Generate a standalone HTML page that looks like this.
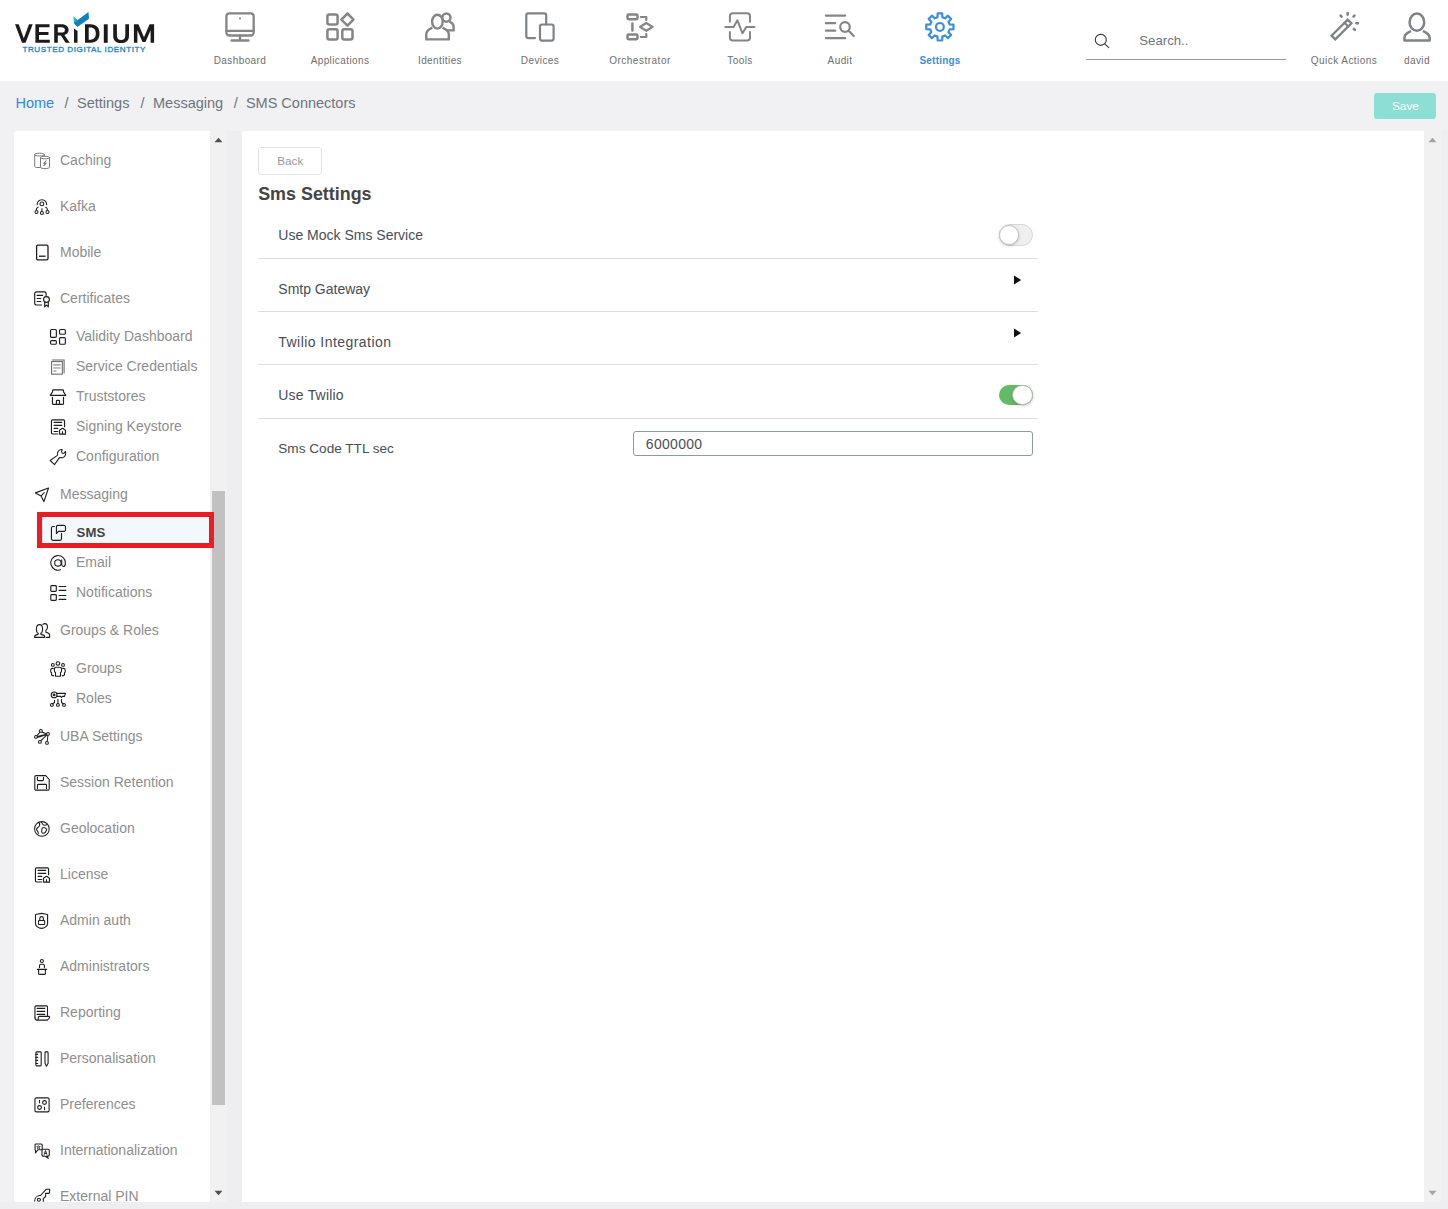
<!DOCTYPE html><html><head><meta charset="utf-8"><title>SMS Connectors</title><style>
*{box-sizing:border-box;margin:0;padding:0}
html,body{width:1448px;height:1209px;overflow:hidden;background:#f1f1f3;font-family:"Liberation Sans",sans-serif}
.t{position:absolute;white-space:nowrap}
svg{position:absolute;overflow:visible}
</style></head><body>
<div style="position:absolute;left:0;top:0;width:1448px;height:81px;background:#fff"></div>
<svg style="left:0;top:0" width="170" height="60" viewBox="0 0 170 60">
<g fill="#1b1b1b" fill-rule="evenodd">
<path d="M15 24.3H18.7L23.8 38.3L29 24.3H32.7L25.6 42.8H22Z"/>
<path d="M35.4 24.3H49.5V27.3H39V32.1H48.5V35H39V39.8H49.8V42.8H35.4Z"/>
<path d="M54.2 42.8V24.3H61.5C66 24.3 68.6 26.6 68.6 29.9C68.6 32.5 67 34.3 64.4 35L69.8 42.8H65.6L60.9 35.5H57.8V42.8Z M57.8 27.3V32.6H61.3C63.7 32.6 64.9 31.6 64.9 29.9C64.9 28.2 63.7 27.3 61.3 27.3Z"/>
<path d="M74 28.4L77.5 31V42.8H74Z"/>
<path d="M85 24.3H90.5C96.5 24.3 99.5 28 99.5 33.5C99.5 39 96.5 42.8 90.5 42.8H85Z M88.7 27.4V39.7H90.3C94 39.7 95.8 37.5 95.8 33.5C95.8 29.5 94 27.4 90.3 27.4Z"/>
<path d="M103.8 24.3H107.7V42.8H103.8Z"/>
<path d="M113.2 24.3H116.9V35.4C116.9 38.4 118.5 39.9 121.1 39.9C123.6 39.9 125.3 38.4 125.3 35.4V24.3H129V35.7C129 40.4 126 43.1 121.1 43.1C116.1 43.1 113.2 40.4 113.2 35.7Z"/>
<path d="M133.9 42.8V24.3H138.4L144 37.3L149.6 24.3H154.1V42.8H150.6V30.2L145.5 42H142.5L137.4 30.2V42.8Z"/>
</g>
<path d="M73.3 16.3L77.9 19.9L74.1 23.2Z" fill="#2bb5c0"/>
<path d="M73.6 22.9L88.5 12.1L89 18.8L77.4 27.1Z" fill="#1380b8"/>
<text x="22.4" y="51.9" font-family="Liberation Sans" font-size="8.1" fill="#1f8bc6" stroke="#1f8bc6" stroke-width="0.35" textLength="123" lengthAdjust="spacing">TRUSTED DIGITAL IDENTITY</text>
</svg>
<svg style="left:220px;top:5px" width="40" height="40" viewBox="0 0 40 40"><g fill="none" stroke="#858585" stroke-width="2.3" stroke-linecap="round"><rect x="6.4" y="8.3" width="27.3" height="22.2" rx="3"/><path d="M6.4 25.9H33.7M20 30.5V35.3M11.5 35.5H28.5"/></g><circle cx="20" cy="13.3" r="1.1" fill="#858585"/></svg>
<div class="t" style="left:190px;width:100px;text-align:center;top:54.88px;font-size:10px;line-height:12px;color:#6e6e6e;font-weight:normal;letter-spacing:0.4px">Dashboard</div>
<svg style="left:320px;top:5px" width="40" height="40" viewBox="0 0 40 40"><g fill="none" stroke="#858585" stroke-width="2.5"><rect x="7.4" y="9.4" width="10.2" height="10.2" rx="2"/><rect x="7.4" y="24.3" width="10.2" height="10.2" rx="2"/><rect x="22.3" y="24.3" width="10.2" height="10.2" rx="2"/><path d="M27.5 8.5L33.5 14.6L27.5 20.7L21.4 14.6Z" stroke-linejoin="round"/></g></svg>
<div class="t" style="left:290px;width:100px;text-align:center;top:54.88px;font-size:10px;line-height:12px;color:#6e6e6e;font-weight:normal;letter-spacing:0.4px">Applications</div>
<svg style="left:420px;top:5px" width="40" height="40" viewBox="0 0 40 40"><g fill="none" stroke="#858585" stroke-width="2.4" stroke-linejoin="round"><circle cx="26.4" cy="12.6" r="4.1"/><path d="M29.3 16.6C32 17.5 33.6 19.4 33.6 22V25.4H25"/><path d="M12.3 22.6C8 24.6 6.3 26.3 6.3 29V34.4H28.8V29C28.8 26.8 26.5 24.6 22.6 22.6" fill="#fff"/><ellipse cx="17.4" cy="16.7" rx="5.3" ry="6.9" fill="#fff"/></g></svg>
<div class="t" style="left:390px;width:100px;text-align:center;top:54.88px;font-size:10px;line-height:12px;color:#6e6e6e;font-weight:normal;letter-spacing:0.4px">Identities</div>
<svg style="left:520px;top:5px" width="40" height="40" viewBox="0 0 40 40"><g fill="none" stroke="#7d8387" stroke-width="2.2" stroke-linecap="round"><path d="M15 33.1H8.3A2 2 0 0 1 6.3 31.1V10.3A2 2 0 0 1 8.3 8.3H24.2A2 2 0 0 1 26.2 10.3V19.5"/><rect x="20" y="19.5" width="13.6" height="16.1" rx="2"/></g></svg>
<div class="t" style="left:490px;width:100px;text-align:center;top:54.88px;font-size:10px;line-height:12px;color:#6e6e6e;font-weight:normal;letter-spacing:0.4px">Devices</div>
<svg style="left:620px;top:5px" width="40" height="40" viewBox="0 0 40 40"><g fill="none" stroke="#858585" stroke-width="2.5" stroke-linecap="round" stroke-linejoin="round"><rect x="7.5" y="9.6" width="10" height="4.6" rx="1.2"/><rect x="7.5" y="29.6" width="10" height="4.6" rx="1.2"/><path d="M12.4 18.4V25.5"/><path d="M20.8 12H26.3V15M20.8 32H26.3V29" stroke-width="2.2"/><path d="M20 21.9L26.3 18L32.6 21.9L26.3 25.8Z" stroke-width="2.2"/></g></svg>
<div class="t" style="left:590px;width:100px;text-align:center;top:54.88px;font-size:10px;line-height:12px;color:#6e6e6e;font-weight:normal;letter-spacing:0.5px">Orchestrator</div>
<svg style="left:720px;top:5px" width="40" height="40" viewBox="0 0 40 40"><g fill="none" stroke="#858585" stroke-width="2" stroke-linejoin="round"><path d="M9.9 17.5V11.3A3 3 0 0 1 12.9 8.3H27A3 3 0 0 1 30 11.3V17.5M9.9 26.2V32.4A3 3 0 0 0 12.9 35.4H27A3 3 0 0 0 30 32.4V26.2"/><path d="M5.3 21.9H13.6L17.4 15.3L22.5 28.3L26.2 21.9H34.5" stroke-linecap="round"/></g></svg>
<div class="t" style="left:690px;width:100px;text-align:center;top:54.88px;font-size:10px;line-height:12px;color:#6e6e6e;font-weight:normal;letter-spacing:0.4px">Tools</div>
<svg style="left:820px;top:5px" width="40" height="40" viewBox="0 0 40 40"><g fill="none" stroke="#858585" stroke-width="2.2" stroke-linecap="round"><path d="M5.9 10.6H25.2M5.9 18.2H15.2M5.9 25.7H15.2M5.9 33.1H25.2"/><circle cx="25" cy="22" r="4.8"/><path d="M28.6 25.8L33.7 31"/></g></svg>
<div class="t" style="left:790px;width:100px;text-align:center;top:54.88px;font-size:10px;line-height:12px;color:#6e6e6e;font-weight:normal;letter-spacing:0.4px">Audit</div>
<svg style="left:920px;top:5px" width="40" height="40" viewBox="0 0 40 40"><g fill="none" stroke="#3b8ee0" stroke-width="2.2" stroke-linejoin="round"><path d="M17.49 12.19 L17.63 8.29 L22.17 8.29 L22.31 12.19 L25.06 13.33 L27.92 10.67 L31.13 13.88 L28.47 16.74 L29.61 19.49 L33.51 19.63 L33.51 24.17 L29.61 24.31 L28.47 27.06 L31.13 29.92 L27.92 33.13 L25.06 30.47 L22.31 31.61 L22.17 35.51 L17.63 35.51 L17.49 31.61 L14.74 30.47 L11.88 33.13 L8.67 29.92 L11.33 27.06 L10.19 24.31 L6.29 24.17 L6.29 19.63 L10.19 19.49 L11.33 16.74 L8.67 13.88 L11.88 10.67 L14.74 13.33 Z"/><circle cx="19.9" cy="21.9" r="3.9"/></g></svg>
<div class="t" style="left:890px;width:100px;text-align:center;top:54.88px;font-size:10px;line-height:12px;color:#3b8ee0;font-weight:bold;letter-spacing:0.2px">Settings</div>
<svg style="left:1090px;top:30px" width="24" height="24" viewBox="0 0 24 24"><g fill="none" stroke="#3a3a3a" stroke-width="1.15"><circle cx="10.8" cy="9.8" r="5.5"/><path d="M14.8 13.8L18.7 17.7" stroke-linecap="round"/></g></svg>
<div class="t" style="left:1139.3px;top:32.98px;font-size:13.2px;line-height:16px;color:#6c757d;font-weight:normal;letter-spacing:0px;">Search..</div>
<div style="position:absolute;left:1086px;top:59px;width:200px;height:1px;background:#8d9b99"></div>
<svg style="left:1324px;top:5px" width="40" height="40" viewBox="0 0 40 40"><g fill="none" stroke="#7d8387" stroke-width="2.3" stroke-linecap="round"><path d="M23.7 14.6L27.4 18.3L11.3 34.4L7.6 30.7Z" stroke-linejoin="miter"/><path d="M20.5 17.8L24.2 21.5"/><path d="M16.6 10.6L17.6 11.6M23.6 8V9.6M30.5 10.6L29.5 11.6M32.4 18.2H34M29.8 23.8L30.8 24.8" stroke-width="2.6"/></g></svg>
<svg style="left:1397px;top:5px" width="40" height="40" viewBox="0 0 40 40"><g fill="none" stroke="#7d8387" stroke-width="2.5" stroke-linejoin="round"><ellipse cx="19.9" cy="17.2" rx="7.3" ry="8.6"/><path d="M14 26C9 28.5 7.5 29.8 7.5 32.5V35.6H32.6V32.5C32.6 29.8 31 28.5 26 26"/></g></svg>
<div class="t" style="left:1294px;width:100px;text-align:center;top:54.88px;font-size:10px;line-height:12px;color:#6e6e6e;letter-spacing:0.45px">Quick Actions</div>
<div class="t" style="left:1367px;width:100px;text-align:center;top:54.88px;font-size:10px;line-height:12px;color:#6e6e6e;letter-spacing:0.4px">david</div>
<div class="t" style="left:15.5px;top:94.83px;font-size:14.5px;line-height:17px;color:#2f88f0;font-weight:normal;letter-spacing:0px;">Home</div>
<div class="t" style="left:64.5px;top:94.83px;font-size:14.5px;line-height:17px;color:#6c757d;font-weight:normal;letter-spacing:0px;">/</div>
<div class="t" style="left:77px;top:94.83px;font-size:14.5px;line-height:17px;color:#6c757d;font-weight:normal;letter-spacing:0px;">Settings</div>
<div class="t" style="left:140.5px;top:94.83px;font-size:14.5px;line-height:17px;color:#6c757d;font-weight:normal;letter-spacing:0px;">/</div>
<div class="t" style="left:153px;top:94.83px;font-size:14.5px;line-height:17px;color:#6c757d;font-weight:normal;letter-spacing:0px;">Messaging</div>
<div class="t" style="left:233.7px;top:94.83px;font-size:14.5px;line-height:17px;color:#6c757d;font-weight:normal;letter-spacing:0px;">/</div>
<div class="t" style="left:245.9px;top:94.83px;font-size:14.5px;line-height:17px;color:#6c757d;font-weight:normal;letter-spacing:0px;">SMS Connectors</div>
<div style="position:absolute;left:1374px;top:93px;width:62px;height:26px;background:#8ddfd5;border-radius:3px"></div>
<div class="t" style="left:1392px;top:99.06px;font-size:11.8px;line-height:14px;color:#fff;font-weight:normal;letter-spacing:0px;">Save</div>
<div style="position:absolute;left:14px;top:131px;width:196px;height:1071px;background:#fff;border-radius:3px 0 0 3px;overflow:hidden">
<div style="position:absolute;left:28px;top:386px;width:168px;height:26px;background:#f2f8fc;border-left:1px solid #cfe3f5"></div>
<svg style="left:20px;top:21px" width="16" height="16" viewBox="0 0 16 16"><g fill="none" stroke="#7a7a7a" stroke-width="1"><path d="M6.5 15.5H3C1.8 15.5 0.7 15 0.7 14.3V2.6C0.7 1.8 2.8 1.2 5.5 1.2S10.4 1.8 10.4 2.6V4.3M0.7 2.6C0.7 3.4 2.8 4 5.5 4S10.4 3.4 10.4 2.6"/><path d="M6.5 5.5C6.5 4.8 8.5 4.3 11 4.3S15.5 4.8 15.5 5.5V15.3C15.5 16 13.5 16.6 11 16.6S6.5 16 6.5 15.3Z"/><path d="M6.5 5.5C6.5 6.2 8.5 6.8 11 6.8S15.5 6.2 15.5 5.5"/><path d="M12.3 8.5L9.9 11.2H12L9.6 13.8" stroke-width="1.1"/></g></svg>
<div class="t" style="left:46px;top:21.00px;font-size:14px;line-height:17px;color:#8e8e8e">Caching</div>
<svg style="left:20px;top:67px" width="16" height="16" viewBox="0 0 16 16"><g fill="none" stroke="#1e1e1e" stroke-width="1.05"><circle cx="7.9" cy="5.9" r="1.9"/><path d="M3.2 7.1A4.75 4.75 0 1 1 12.6 7.1"/><path d="M4.5 8.9C3.2 9.4 2.4 10.2 2.4 11.3V12.4M11.3 8.9C12.6 9.4 13.4 10.2 13.4 11.3V12.4M7.9 10.3V13.4"/><circle cx="2.5" cy="14" r="1.5"/><circle cx="7.9" cy="15" r="1.5"/><circle cx="13.5" cy="14" r="1.5"/></g></svg>
<div class="t" style="left:46px;top:67.00px;font-size:14px;line-height:17px;color:#8e8e8e">Kafka</div>
<svg style="left:20px;top:113px" width="16" height="16" viewBox="0 0 16 16"><g fill="none" stroke="#1e1e1e" stroke-width="1.3"><rect x="2.6" y="1.2" width="11.4" height="14.6" rx="1.3"/><path d="M5 12.2H11.6"/></g></svg>
<div class="t" style="left:46px;top:113.00px;font-size:14px;line-height:17px;color:#8e8e8e">Mobile</div>
<svg style="left:20px;top:159px" width="16" height="16" viewBox="0 0 16 16"><g fill="none" stroke="#1e1e1e" stroke-width="1.15" stroke-linecap="round"><path d="M7.6 15H2.4A1.7 1.7 0 0 1 .7 13.3V3.6A1.7 1.7 0 0 1 2.4 1.9H10.4A1.7 1.7 0 0 1 12.1 3.6V6.6"/><path d="M3.1 5.4H8.7M3.1 8.5H6.8M3.1 11.5H6.8"/><circle cx="12.5" cy="9.5" r="2.9"/><path d="M10.7 12V16.6L12.5 15.3L14.3 16.6V12"/></g></svg>
<div class="t" style="left:46px;top:159.00px;font-size:14px;line-height:17px;color:#8e8e8e">Certificates</div>
<svg style="left:36px;top:197px" width="16" height="16" viewBox="0 0 16 16"><g fill="none" stroke="#1e1e1e" stroke-width="1.15"><rect x=".55" y="1.5" width="5.8" height="7.85" rx="1"/><rect x="9.55" y="1.5" width="5.8" height="4.75" rx="1"/><rect x=".55" y="12.55" width="5.8" height="3.7" rx="1"/><rect x="9.55" y="9.55" width="5.8" height="6.7" rx="1"/></g></svg>
<div class="t" style="left:62px;top:197.00px;font-size:14px;line-height:17px;color:#8e8e8e">Validity Dashboard</div>
<svg style="left:36px;top:227px" width="16" height="16" viewBox="0 0 16 16"><g fill="none" stroke-linecap="round"><rect x="1.6" y="3.6" width="10.75" height="12.55" stroke="#666" stroke-width="1.05"/><path d="M2.5 1.9H14.1V15" stroke="#666" stroke-width="1.05"/><path d="M3.9 6.9H10.1M3.9 10H10.1M3.9 13H5.9" stroke="#aaa" stroke-width="1.6"/></g></svg>
<div class="t" style="left:62px;top:227.00px;font-size:14px;line-height:17px;color:#8e8e8e">Service Credentials</div>
<svg style="left:36px;top:257px" width="16" height="16" viewBox="0 0 16 16"><g fill="none" stroke="#1e1e1e" stroke-width="1.15" stroke-linejoin="round" stroke-linecap="round"><path d="M2.6 3.9V2.6A.8.8 0 0 1 3.4 1.9H12.7A.8.8 0 0 1 13.5 2.6V3.9L15.8 7.3H.2L2.6 3.9"/><path d="M2.45 9.3V15.4A1 1 0 0 0 3.45 16.4H12.5A1 1 0 0 0 13.5 15.4V9.3M6.4 16.4V13.1A.8.8 0 0 1 7.2 12.3H8.7A.8.8 0 0 1 9.5 13.1V16.4"/></g></svg>
<div class="t" style="left:62px;top:257.00px;font-size:14px;line-height:17px;color:#8e8e8e">Truststores</div>
<svg style="left:36px;top:287px" width="16" height="16" viewBox="0 0 16 16"><g fill="none" stroke="#1e1e1e" stroke-width="1.15" stroke-linecap="round" stroke-linejoin="round"><path d="M7.7 16H2.45A1 1 0 0 1 1.45 15V2.9A1 1 0 0 1 2.45 1.9H13.55A1 1 0 0 1 14.55 2.9V8.7"/><path d="M4.1 4.4H11.7M4.1 7.4H11.7M4.1 10.4H7.7M4.1 13.5H7.7"/><path d="M9.5 16.1V12.3L12.5 10.3L15.5 12.3V16.1ZM12.5 16.1V13.6"/></g></svg>
<div class="t" style="left:62px;top:287.00px;font-size:14px;line-height:17px;color:#8e8e8e">Signing Keystore</div>
<svg style="left:36px;top:317px" width="16" height="16" viewBox="0 0 16 16"><g fill="none" stroke="#1e1e1e" stroke-width="1.05" stroke-linejoin="round"><path d="M.2 12.5L7.4 7.4C7 4.5 8.5 1.6 11 1.4L12.3 1.7L11.5 3.6L12.3 5.3H13.9L15.5 3.4C16 6.5 15 9 12.4 9.7L9.6 9.4L4.5 16.6Z"/></g></svg>
<div class="t" style="left:62px;top:317.00px;font-size:14px;line-height:17px;color:#8e8e8e">Configuration</div>
<svg style="left:20px;top:355px" width="16" height="16" viewBox="0 0 16 16"><g fill="none" stroke="#1e1e1e" stroke-width="1.15" stroke-linejoin="round"><path d="M1.4 6.9L14.5 2L9.9 15.6L7.1 9.9Z"/><path d="M7.1 9.9L10.5 6.3"/></g></svg>
<div class="t" style="left:46px;top:355.00px;font-size:14px;line-height:17px;color:#8e8e8e">Messaging</div>
<svg style="left:36px;top:393px" width="16" height="16" viewBox="0 0 16 16"><g fill="none" stroke="#fff" stroke-width="3" stroke-linejoin="round"><path d="M6.4 9.5V2.9A1.5 1.5 0 0 1 7.9 1.4H14A1.5 1.5 0 0 1 15.5 2.9V5.9A1.5 1.5 0 0 1 14 7.4H8.5Z"/></g><g fill="none" stroke="#1e1e1e" stroke-width="1.15" stroke-linejoin="round" stroke-linecap="round"><path d="M4.5 2.45H2.9A1.45 1.45 0 0 0 1.45 3.9V14.8A1.5 1.5 0 0 0 2.95 16.3H10A1.5 1.5 0 0 0 11.5 14.8V9.3"/><path d="M6.4 9.5V2.9A1.5 1.5 0 0 1 7.9 1.4H14A1.5 1.5 0 0 1 15.5 2.9V5.9A1.5 1.5 0 0 1 14 7.4H8.5Z"/></g></svg>
<div class="t" style="left:62.6px;top:393.78px;font-size:13.2px;line-height:16px;color:#454545;font-weight:bold">SMS</div>
<svg style="left:36px;top:423px" width="16" height="16" viewBox="0 0 16 16"><g fill="none" stroke="#1e1e1e" stroke-width="1.1"><circle cx="7.9" cy="8.9" r="3.2"/><path d="M11.7 5.5V10.6C11.7 11.8 12.5 12.5 13.5 12.5C14.8 12.5 15.4 11 15.4 8.9A7.3 7.3 0 1 0 10.9 15.6"/></g></svg>
<div class="t" style="left:62px;top:423.00px;font-size:14px;line-height:17px;color:#8e8e8e">Email</div>
<svg style="left:36px;top:453px" width="16" height="16" viewBox="0 0 16 16"><g fill="none" stroke="#1e1e1e" stroke-width="1.15" stroke-linecap="round"><rect x=".8" y="1.6" width="5.5" height="5.8" rx=".8"/><rect x=".8" y="10.6" width="5.5" height="5.7" rx=".8"/><path d="M9.1 2.45H15.8M9.1 6.4H15.8M9.1 11.5H15.8M9.1 15.4H15.8"/></g></svg>
<div class="t" style="left:62px;top:453.00px;font-size:14px;line-height:17px;color:#8e8e8e">Notifications</div>
<svg style="left:20px;top:491px" width="16" height="16" viewBox="0 0 16 16"><g fill="none" stroke="#1e1e1e" stroke-width="1.1" stroke-linejoin="round" stroke-linecap="round"><path d="M4.3 11.4C2.9 10.8 2.4 9.6 2.4 7.2C2.4 4.2 3.6 2.6 5.5 2.6C7.4 2.6 8.6 4.2 8.6 7.2C8.6 9.6 8 10.8 6.6 11.4L7 12.4C9.8 13 10.7 13.6 10.7 14.5V15.4H.7V14.5C.7 13.6 1.7 12.8 4 12.4Z"/><path d="M8.9 2.5C9.4 1.9 10 1.6 10.8 1.6C12.4 1.6 13.5 3 13.5 5.3C13.5 6.6 13 7.6 11.9 8.2V10.3C14.6 11 15.6 11.6 15.6 12.8V15.4H12.5"/></g></svg>
<div class="t" style="left:46px;top:491.00px;font-size:14px;line-height:17px;color:#8e8e8e">Groups &amp; Roles</div>
<svg style="left:36px;top:529px" width="16" height="16" viewBox="0 0 16 16"><g fill="none" stroke="#1e1e1e" stroke-width="1.1" stroke-linejoin="round" stroke-linecap="round"><ellipse cx="7.9" cy="3.5" rx="1.8" ry="1.7"/><circle cx="2.85" cy="4.9" r="1.4"/><circle cx="13" cy="4.9" r="1.4"/><path d="M5.5 16.2V12.6C4.7 12.4 4.4 11.5 4.4 10.5V9.2C4.4 8 5.5 7.3 6.6 7.3H9.3C10.5 7.3 11.6 8 11.6 9.2V10.5C11.6 11.5 11.3 12.4 10.5 12.6V16.2Z"/><path d="M3.3 8.4H2.3C1.3 8.4 .7 9.4 .7 10.5V11.4C.7 12.1 1.2 12.5 1.5 12.6V14.6C1.5 15.4 2 15.6 2.6 15.6H3.7M12.7 8.4H13.7C14.7 8.4 15.3 9.4 15.3 10.5V11.4C15.3 12.1 14.8 12.5 14.5 12.6V14.6C14.5 15.4 14 15.6 13.4 15.6H12.3"/></g></svg>
<div class="t" style="left:62px;top:529.00px;font-size:14px;line-height:17px;color:#8e8e8e">Groups</div>
<svg style="left:36px;top:559px" width="16" height="16" viewBox="0 0 16 16"><g fill="none" stroke="#1e1e1e" stroke-width="1.1" stroke-linejoin="round" stroke-linecap="round"><circle cx="4.1" cy="4.9" r="2.9"/><circle cx="4.1" cy="4.9" r=".9" fill="#1e1e1e"/><path d="M7.1 3.4L15.5 3.3L14.5 6.4H12.5L11.5 7.5L10.7 6.4H7.1"/><path d="M4.5 10.3V12.5L2.6 13.8M7.9 9.3V13.4M11.5 9.2V12.5L13.3 13.8"/><circle cx="1.85" cy="14.9" r="1.4"/><circle cx="7.9" cy="14.9" r="1.4"/><circle cx="14" cy="14.9" r="1.4"/></g></svg>
<div class="t" style="left:62px;top:559.00px;font-size:14px;line-height:17px;color:#8e8e8e">Roles</div>
<svg style="left:20px;top:597px" width="16" height="16" viewBox="0 0 16 16"><g fill="none" stroke="#1e1e1e" stroke-width="1.05"><circle cx="6.9" cy="2.9" r="1.4"/><circle cx="14" cy="5.9" r="1.4"/><circle cx="1.95" cy="8.9" r="1.4"/><circle cx="5.9" cy="13.9" r="1.4"/><circle cx="13" cy="14.9" r="1.4"/><path d="M8 3.9C9.2 5 10.8 5 12.6 5.6M6.1 4.1L2.8 7.7M3.3 8.6C6 7.6 9.5 6.8 12.6 6.2M3.2 9.4C6.3 8.6 9.6 7.6 12.8 6.6M6.8 12.8L12.9 6.9M13.9 7.3L13.2 13.5"/></g></svg>
<div class="t" style="left:46px;top:597.00px;font-size:14px;line-height:17px;color:#8e8e8e">UBA Settings</div>
<svg style="left:20px;top:643px" width="16" height="16" viewBox="0 0 16 16"><g fill="none" stroke="#1e1e1e" stroke-width="1.1" stroke-linejoin="round" stroke-linecap="round"><path d="M2 1.6H11.7L15.2 5.5V14.9A1.2 1.2 0 0 1 14 16.1H2A1.2 1.2 0 0 1 .8 14.9V2.8A1.2 1.2 0 0 1 2 1.6Z"/><path d="M3.45 3.2V5.8A.8.8 0 0 0 4.25 6.6H8.7A.8.8 0 0 0 9.5 5.8V3.2M3.45 14.5V11.2A.8.8 0 0 1 4.25 10.4H11.7A.8.8 0 0 1 12.5 11.2V14.5"/></g></svg>
<div class="t" style="left:46px;top:643.00px;font-size:14px;line-height:17px;color:#8e8e8e">Session Retention</div>
<svg style="left:20px;top:689px" width="16" height="16" viewBox="0 0 16 16"><g fill="none" stroke="#1e1e1e" stroke-width="1.05"><circle cx="7.9" cy="8.9" r="7.3"/><path d="M4.4 2.2C5.7 3.2 6 4.8 5.4 6C4.6 7 2.6 8 2.4 9.5C3.2 10.6 4.6 11.6 4.3 13.9"/><path d="M7.2 1.6C7.9 3.4 8.6 5 10.2 5.3C11.5 5.5 12.6 5 13.5 3.9"/><path d="M8.4 8C9.5 7.3 11.6 7.4 12.8 9.4C12.3 11 11.4 13.2 9.4 13.3C7.4 13.4 7.6 11 7.8 9.8C7.9 9 8 8.4 8.4 8Z"/></g></svg>
<div class="t" style="left:46px;top:689.00px;font-size:14px;line-height:17px;color:#8e8e8e">Geolocation</div>
<svg style="left:20px;top:735px" width="16" height="16" viewBox="0 0 16 16"><g fill="none" stroke="#1e1e1e" stroke-width="1.15" stroke-linecap="round" stroke-linejoin="round"><path d="M7.7 16H2.45A1 1 0 0 1 1.45 15V2.9A1 1 0 0 1 2.45 1.9H13.55A1 1 0 0 1 14.55 2.9V8.7"/><path d="M4.1 4.4H11.7M4.1 7.4H11.7M4.1 10.4H7.7M4.1 13.5H7.7"/><path d="M9.5 16.1V12.3L12.5 10.3L15.5 12.3V16.1ZM12.5 16.1V13.6"/></g></svg>
<div class="t" style="left:46px;top:735.00px;font-size:14px;line-height:17px;color:#8e8e8e">License</div>
<svg style="left:20px;top:781px" width="16" height="16" viewBox="0 0 16 16"><g fill="none" stroke="#1e1e1e" stroke-width="1.1" stroke-linejoin="round"><path d="M1.5 2.5C3.5 2.3 5.5 1.4 7.5 1.4C9.5 1.4 11.5 2.3 13.6 2.5V11.5C13.6 14 10.5 16.4 7.5 16.4C4.5 16.4 1.5 14 1.5 11.5Z"/><rect x="4.5" y="8.5" width="6.2" height="4" rx=".8"/><path d="M5.8 8.5V6.4A1.8 1.8 0 0 1 9.4 6.4V8.5"/></g></svg>
<div class="t" style="left:46px;top:781.00px;font-size:14px;line-height:17px;color:#8e8e8e">Admin auth</div>
<svg style="left:20px;top:827px" width="16" height="16" viewBox="0 0 16 16"><g fill="none" stroke="#1e1e1e" stroke-width="1.1" stroke-linecap="round"><circle cx="7.9" cy="2.95" r="1.5"/><path d="M5.5 9.6V7.5C5.5 6.6 6.2 6.3 7 6.3H8.9C9.7 6.3 10.4 6.6 10.4 7.5V9.6"/><path d="M3.3 11.4H12.7"/><path d="M4.6 11.4V15.6A.8.8 0 0 0 5.4 16.4H10.6A.8.8 0 0 0 11.4 15.6V11.4"/></g></svg>
<div class="t" style="left:46px;top:827.00px;font-size:14px;line-height:17px;color:#8e8e8e">Administrators</div>
<svg style="left:20px;top:873px" width="16" height="16" viewBox="0 0 16 16"><g fill="none" stroke="#1e1e1e" stroke-width="1.1" stroke-linejoin="round" stroke-linecap="round"><path d="M13.5 11.5V2.9A1 1 0 0 0 12.5 1.9H1.95A1 1 0 0 0 .95 2.9V13.5"/><path d="M.95 13.5C.95 15.2 2 16.1 3 16.1H13.4L15.3 14L15.6 13.2C15.6 12.7 15.2 12.4 14.6 12.4H5.2C4.6 12.4 4.4 12.9 4.4 13.4L4.1 15.2C3.9 15.8 3.5 16.1 3 16.1"/><path d="M3.1 4.4H10.7M3.1 7.4H10.7M3.1 10.4H10.7"/></g></svg>
<div class="t" style="left:46px;top:873.00px;font-size:14px;line-height:17px;color:#8e8e8e">Reporting</div>
<svg style="left:20px;top:919px" width="16" height="16" viewBox="0 0 16 16"><g fill="none" stroke="#1e1e1e" stroke-width="1.1" stroke-linejoin="round" stroke-linecap="round"><rect x="1.9" y="1.9" width="5.3" height="14" rx=".9"/><path d="M1.9 4.4H3.7M1.9 7.4H3.7M1.9 10.4H3.7M1.9 13.5H3.7"/><path d="M11 13.3V2.8A.9.9 0 0 1 11.9 1.9H13.2A.9.9 0 0 1 14.1 2.8V13.3L12.5 16.2Z"/></g></svg>
<div class="t" style="left:46px;top:919.00px;font-size:14px;line-height:17px;color:#8e8e8e">Personalisation</div>
<svg style="left:20px;top:965px" width="16" height="16" viewBox="0 0 16 16"><g fill="none" stroke="#1e1e1e" stroke-width="1.1" stroke-linecap="round"><rect x=".95" y="1.9" width="14.15" height="14" rx="1.3"/><circle cx="10.5" cy="6.5" r="1.9"/><circle cx="5.5" cy="11.5" r="1.9"/><path d="M5.5 4.3V6.7M10.5 11.3V13.7"/></g></svg>
<div class="t" style="left:46px;top:965.00px;font-size:14px;line-height:17px;color:#8e8e8e">Preferences</div>
<svg style="left:20px;top:1011px" width="16" height="16" viewBox="0 0 16 16"><g fill="none" stroke="#1e1e1e" stroke-width="1.1" stroke-linejoin="round"><path d="M2.1 1.95H7.2A1 1 0 0 1 8.2 2.95V7.8H3.8L1.5 10.8V8.6C1.2 8.4 1.05 8 1.05 7.6V2.95A1 1 0 0 1 2.1 1.95Z"/><path d="M4.5 3.6L5.1 4.6H6.2L5.4 5.4L5.7 6.6L4.5 5.9L3.3 6.6L3.6 5.4L2.8 4.6H3.9Z" stroke-width=".8"/><path d="M9 7.2H14.3A1 1 0 0 1 15.3 8.2V13.1A1 1 0 0 1 14.3 14.1H12.5L14.4 16.4L10.8 14.1H9A1 1 0 0 1 8 13.1V8.2A1 1 0 0 1 9 7.2Z" fill="#fff"/><path d="M10.1 12.6L11.5 8.6L12.9 12.6M10.6 11.4H12.4" stroke-width=".95"/></g></svg>
<div class="t" style="left:46px;top:1011.00px;font-size:14px;line-height:17px;color:#8e8e8e">Internationalization</div>
<svg style="left:20px;top:1057px" width="16" height="16" viewBox="0 0 16 16"><g fill="none" stroke="#1e1e1e" stroke-width="1.1" stroke-linejoin="round"><path d="M.6 13.6C.6 10.5 2.5 7.7 5.5 7.5H6.5L12.1 1.3H15.6V4.7L15 5.4H11.6V8.5L9.3 10.6V13.8"/><circle cx="4.9" cy="11.8" r="1.5"/></g></svg>
<div class="t" style="left:46px;top:1057.00px;font-size:14px;line-height:17px;color:#8e8e8e">External PIN</div>
</div>
<div style="position:absolute;left:227px;top:131px;width:15px;height:1078px;background:#eeeef0"></div>
<div style="position:absolute;left:0;top:1202px;width:1448px;height:7px;background:#eeeef0"></div>
<div style="position:absolute;left:1441px;top:131px;width:7px;height:1078px;background:#eeeef0"></div>
<div style="position:absolute;left:210px;top:131px;width:17px;height:1071px;background:#f1f1f1"></div>
<div style="position:absolute;left:212px;top:491px;width:13px;height:614px;background:#c1c1c1"></div>
<svg style="left:210px;top:131px" width="17" height="17"><path d="M4.5 11.2L8.5 6.8L12.5 11.2Z" fill="#505050"/></svg>
<svg style="left:210px;top:1185px" width="17" height="17"><path d="M4.5 5.8L8.5 10.2L12.5 5.8Z" fill="#505050"/></svg>
<div style="position:absolute;left:37px;top:512px;width:177px;height:36px;border:5px solid #ec1c24"></div>
<div style="position:absolute;left:242px;top:131px;width:1182px;height:1071px;background:#fff;border-radius:3px 0 0 0"></div>
<div style="position:absolute;left:1424px;top:131px;width:17px;height:1071px;background:#f1f1f1"></div>
<svg style="left:1424px;top:131px" width="17" height="17"><path d="M4.5 11.2L8.5 6.8L12.5 11.2Z" fill="#a3a3a3"/></svg>
<svg style="left:1424px;top:1185px" width="17" height="17"><path d="M4.5 5.8L8.5 10.2L12.5 5.8Z" fill="#a3a3a3"/></svg>
<div style="position:absolute;left:258px;top:147px;width:64px;height:28px;border:1px solid #e3e3e3;border-radius:3px;background:#fff"></div>
<div class="t" style="left:277.3px;top:154.40px;font-size:11.7px;line-height:14px;color:#9a9a9a;font-weight:normal;letter-spacing:0px;">Back</div>
<div class="t" style="left:258.2px;top:184.35px;font-size:17.9px;line-height:21px;color:#454545;font-weight:bold;letter-spacing:0px;">Sms Settings</div>
<div class="t" style="left:278.3px;top:227.00px;font-size:14px;line-height:17px;color:#484d55;font-weight:normal;letter-spacing:0px;">Use Mock Sms Service</div>
<div class="t" style="left:278.3px;top:280.70px;font-size:14px;line-height:17px;color:#484d55;font-weight:normal;letter-spacing:0px;">Smtp Gateway</div>
<div class="t" style="left:278.3px;top:333.50px;font-size:14px;line-height:17px;color:#484d55;font-weight:normal;letter-spacing:0.45px;">Twilio Integration</div>
<div class="t" style="left:278.3px;top:386.60px;font-size:14px;line-height:17px;color:#484d55;font-weight:normal;letter-spacing:0.2px;">Use Twilio</div>
<div class="t" style="left:278.3px;top:441.14px;font-size:13.6px;line-height:16px;color:#484d55;font-weight:normal;letter-spacing:0px;">Sms Code TTL sec</div>
<div style="position:absolute;left:258px;top:258px;width:780px;height:1px;background:#dedede"></div>
<div style="position:absolute;left:258px;top:311px;width:780px;height:1px;background:#dedede"></div>
<div style="position:absolute;left:258px;top:364px;width:780px;height:1px;background:#dedede"></div>
<div style="position:absolute;left:258px;top:418px;width:780px;height:1px;background:#dedede"></div>
<div style="position:absolute;left:998.5px;top:224.3px;width:34.2px;height:21.3px;border-radius:11px;background:#efefef;border:1px solid #d8d8d8"></div>
<div style="position:absolute;left:998.5px;top:224.6px;width:20.8px;height:20.8px;border-radius:50%;background:#fff;border:1px solid #c4c4c4;box-shadow:0 1px 3px rgba(0,0,0,.22)"></div>
<div style="position:absolute;left:998.7px;top:384.6px;width:34px;height:20.8px;border-radius:11px;background:#62bb65"></div>
<div style="position:absolute;left:1011.8px;top:384.6px;width:20.9px;height:20.9px;border-radius:50%;background:#fff;border:1px solid #b8b8b8;box-shadow:0 1px 3px rgba(0,0,0,.22)"></div>
<svg style="left:1010px;top:272px" width="16" height="16"><path d="M4 3.4L11.2 8L4 12.6Z" fill="#111"/></svg>
<svg style="left:1010px;top:325px" width="16" height="16"><path d="M4 3.4L11.2 8L4 12.6Z" fill="#111"/></svg>
<div style="position:absolute;left:633px;top:431px;width:400px;height:25px;border:1px solid #8c9c9a;border-radius:3px;background:#fff"></div>
<div class="t" style="left:645.8px;top:435.60px;font-size:14px;line-height:17px;color:#495057;font-weight:normal;letter-spacing:0.3px;">6000000</div>
</body></html>
